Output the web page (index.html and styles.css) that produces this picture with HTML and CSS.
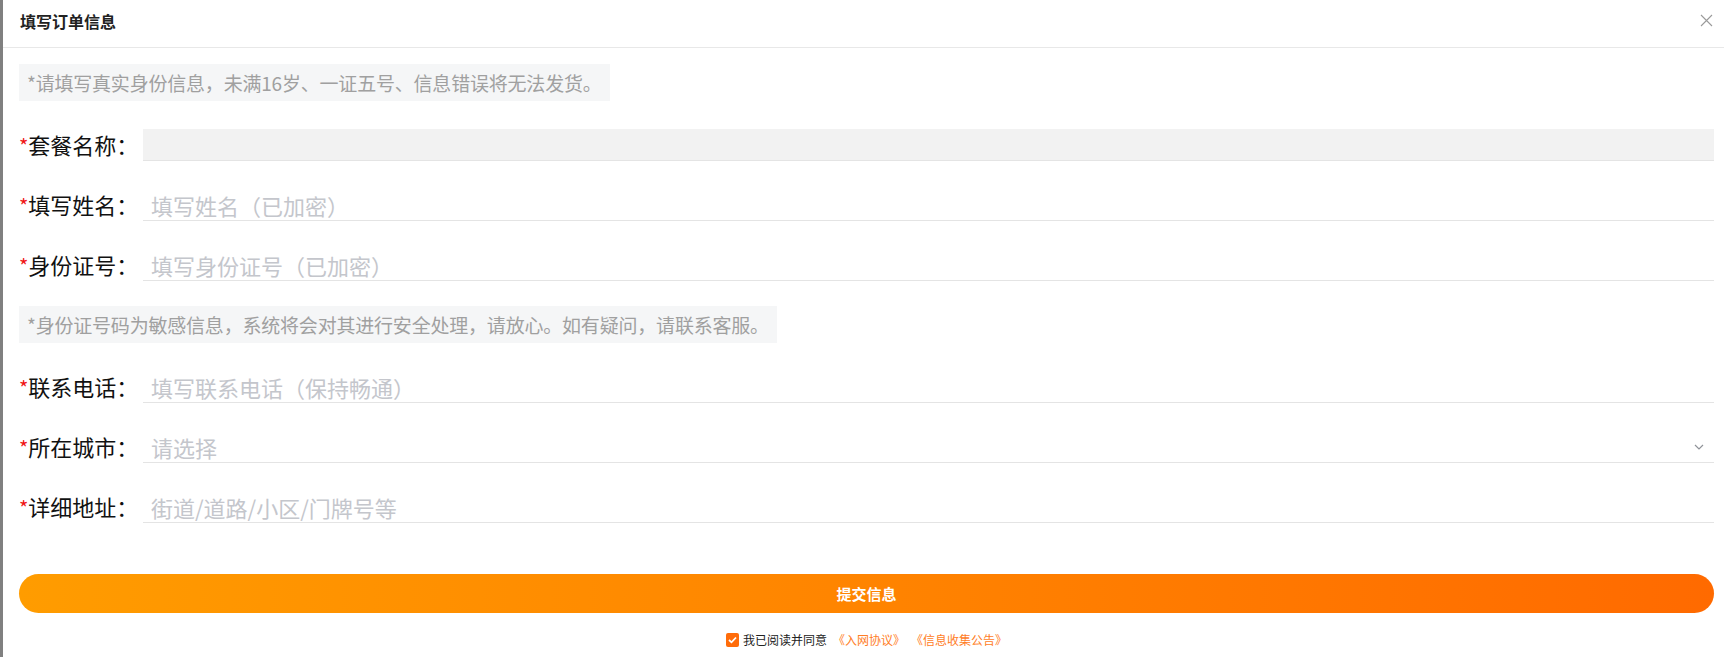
FILE: index.html
```html
<!DOCTYPE html>
<html lang="zh-CN">
<head>
  <meta charset="UTF-8">
  <meta name="viewport" content="width=device-width, initial-scale=1.0">
  <title>填写订单信息</title>
  <link rel="stylesheet" href="styles.css">
</head>
<body>
  <div class="dialog">
    <div class="dialog__header">
      <span class="dialog__title">填写订单信息</span>
      <span class="dialog__close">
        <svg width="13" height="13" viewBox="0 0 13 13"><path d="M1 1 L12 12 M12 1 L1 12" stroke="#9a9a9a" stroke-width="1.1" fill="none"/></svg>
      </span>
    </div>
    <div class="dialog__body">
      <div class="form">
        <div class="tip">*请填写真实身份信息，未满16岁、一证五号、信息错误将无法发货。</div>
        <div class="form__row">
          <label class="form__label"><i class="form__star">*</i>套餐名称：</label>
          <input class="form__input form__input--disabled" disabled>
        </div>
        <div class="form__row">
          <label class="form__label"><i class="form__star">*</i>填写姓名：</label>
          <input class="form__input" placeholder="填写姓名（已加密）">
        </div>
        <div class="form__row">
          <label class="form__label"><i class="form__star">*</i>身份证号：</label>
          <input class="form__input" placeholder="填写身份证号（已加密）">
        </div>
        <div class="tip tip--second">*身份证号码为敏感信息，系统将会对其进行安全处理，请放心。如有疑问，请联系客服。</div>
        <div class="form__row">
          <label class="form__label"><i class="form__star">*</i>联系电话：</label>
          <input class="form__input" placeholder="填写联系电话（保持畅通）">
        </div>
        <div class="form__row">
          <label class="form__label"><i class="form__star">*</i>所在城市：</label>
          <div class="form__select">
            <span class="form__select__text">请选择</span>
            <svg width="10" height="6" viewBox="0 0 10 6"><path d="M1 1 L5 5 L9 1" stroke="#909399" stroke-width="1.2" fill="none"/></svg>
          </div>
        </div>
        <div class="form__row">
          <label class="form__label"><i class="form__star">*</i>详细地址：</label>
          <input class="form__input" placeholder="街道/道路/小区/门牌号等">
        </div>
      </div>
      <div class="submit">提交信息</div>
      <div class="agree">
        <span class="agree__check">
          <svg width="9" height="8" viewBox="0 0 9 8"><path d="M1 4 L3.5 6.3 L8 1.5" stroke="#fff" stroke-width="1.8" fill="none"/></svg>
        </span>
        <span class="agree__text">我已阅读并同意</span>
        <a class="agree__link">《入网协议》</a>
        <a class="agree__link">《信息收集公告》</a>
      </div>
    </div>
  </div>
</body>
</html>
```

FILE: styles.css
```css
/* 订单弹窗 */
* {
  box-sizing: border-box;
}
body {
  margin: 0;
  background: #fff;
  font-family: "Noto Sans CJK SC", "Microsoft YaHei", sans-serif;
}
.dialog {
  width: 1724px;
  min-height: 657px;
  border-left: 3px solid #808080;
}
.dialog__header {
  height: 48px;
  padding: 0 11px 6px 17px;
  display: flex;
  align-items: center;
  justify-content: space-between;
  border-bottom: 1px solid #e8e8e8;
}
.dialog__title {
  font-size: 16px;
  font-weight: 700;
  color: #222;
  line-height: 20px;
}
.dialog__close {
  display: flex;
  width: 13px;
  height: 13px;
  cursor: pointer;
}
.dialog__body {
  padding: 16px 10px 0 16px;
}

.form {
  display: flex;
  flex-direction: column;
  gap: 28px;
}
.tip {
  align-self: flex-start;
  height: 37px;
  line-height: 37px;
  padding: 0 8px;
  font-size: 19px;
  color: #a0a0a0;
  background: #f5f6f7;
  letter-spacing: -0.2px;
}
.tip--second {
  margin-top: -3px;
}
.form__row {
  display: flex;
  align-items: center;
  height: 32px;
}
.form__label {
  width: 124px;
  flex-shrink: 0;
  font-size: 22px;
  line-height: 31px;
  color: #111;
  white-space: nowrap;
}
.form__star {
  font-style: normal;
  color: #f01414;
  font-size: 20px;
}
.form__input {
  flex-grow: 1;
  height: 32px;
  padding: 0 8px;
  border: none;
  border-bottom: 1px solid #e4e4e4;
  outline: none;
  font-family: inherit;
  font-size: 22px;
  color: #333;
  background: transparent;
}
.form__input::placeholder {
  color: #c4c6cc;
  font-family: "Noto Sans CJK TC", "Noto Sans CJK SC", sans-serif;
}
.form__input--disabled {
  background: #f2f2f2;
}
.form__select {
  flex-grow: 1;
  height: 32px;
  padding: 0 10px 0 8px;
  display: flex;
  align-items: center;
  justify-content: space-between;
  border-bottom: 1px solid #e4e4e4;
}
.form__select__text {
  font-size: 22px;
  color: #c4c6cc;
}

.submit {
  margin-top: 51px;
  height: 39px;
  line-height: 39px;
  border-radius: 20px;
  text-align: center;
  font-size: 15px;
  font-weight: 700;
  color: #fff;
  background: linear-gradient(90deg, #ff9c00 0%, #ff8400 50%, #ff6a00 100%);
  cursor: pointer;
}
.agree {
  margin-top: 19px;
  display: flex;
  align-items: center;
  justify-content: center;
  font-size: 12px;
  line-height: 16px;
}
.agree__check {
  width: 13px;
  height: 14px;
  margin-right: 4px;
  border-radius: 2px;
  background: #ff6c0a;
  display: flex;
  align-items: center;
  justify-content: center;
}
.agree__text {
  color: #222;
}
.agree__link {
  margin-left: 6px;
  color: #ff7d26;
  cursor: pointer;
}
```
